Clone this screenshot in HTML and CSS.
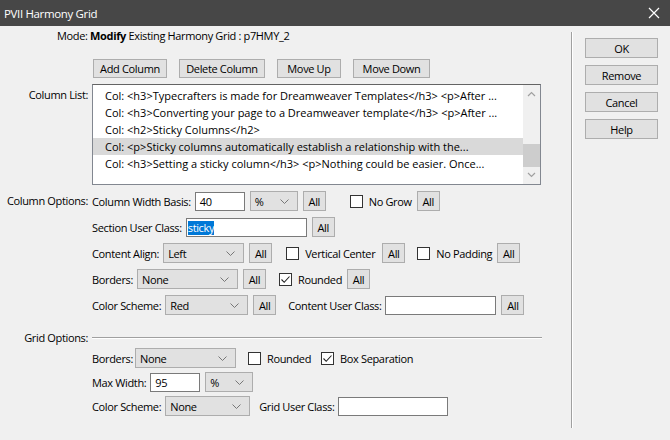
FILE: index.html
```html
<!DOCTYPE html>
<html>
<head>
<meta charset="utf-8">
<link rel="stylesheet" href="styles.css">
</head>
<body>
<div class="titlebar">
  <span class="title">PVII Harmony Grid</span>
  <svg class="close" width="12" height="12" viewBox="0 0 12 12"><path d="M1 1L11 11M11 1L1 11" stroke="#fff" stroke-width="1.2" fill="none"/></svg>
</div>
<div class="dialog">
  <div class="main">
    <div class="mode">Mode: <b>Modify</b> Existing Harmony Grid : p7HMY_2</div>
    <div class="toolbar">
      <div class="btn w-add">Add Column</div>
      <div class="btn w-del">Delete Column</div>
      <div class="btn w-up">Move Up</div>
      <div class="btn w-down">Move Down</div>
    </div>

    <div class="group list-group">
      <div class="glabel list-label">Column List:</div>
      <div class="listbox">
        <div class="items">
          <div class="item">Col: &lt;h3&gt;Typecrafters is made for Dreamweaver Templates&lt;/h3&gt; &lt;p&gt;After ...</div>
          <div class="item">Col: &lt;h3&gt;Converting your page to a Dreamweaver template&lt;/h3&gt; &lt;p&gt;After ...</div>
          <div class="item">Col: &lt;h2&gt;Sticky Columns&lt;/h2&gt;</div>
          <div class="item selected">Col: &lt;p&gt;Sticky columns automatically establish a relationship with the...</div>
          <div class="item">Col: &lt;h3&gt;Setting a sticky column&lt;/h3&gt; &lt;p&gt;Nothing could be easier. Once...</div>
        </div>
        <div class="scrollbar">
          <svg class="arrow" width="9" height="6" viewBox="0 0 9 6"><path d="M1 5L4.5 1.5L8 5" stroke="#a0a0a0" stroke-width="1.2" fill="none"/></svg>
          <div class="track"><div class="thumb"></div></div>
          <svg class="arrow" width="9" height="6" viewBox="0 0 9 6"><path d="M1 1L4.5 4.5L8 1" stroke="#a0a0a0" stroke-width="1.2" fill="none"/></svg>
        </div>
      </div>
    </div>

    <div class="group col-group">
      <div class="glabel opt-label">Column Options:</div>
      <div class="rows">
        <div class="row">
          <span class="lbl">Column Width Basis:</span>
          <div class="input w-40">40</div>
          <div class="select w-pct"><span>%</span><svg class="chev" width="9" height="5" viewBox="0 0 9 5"><path d="M0.5 0.5L4.5 4.5L8.5 0.5" stroke="#777" fill="none"/></svg></div>
          <div class="btn all">All</div>
          <div class="check-wrap ml-19"><span class="cb"></span><span>No Grow</span></div>
          <div class="btn all">All</div>
        </div>
        <div class="row">
          <span class="lbl">Section User Class:</span>
          <div class="input w-sec"><span class="sel-text">sticky</span></div>
          <div class="btn all">All</div>
        </div>
        <div class="row">
          <span class="lbl">Content Align:</span>
          <div class="select w-align"><span>Left</span><svg class="chev" width="9" height="5" viewBox="0 0 9 5"><path d="M0.5 0.5L4.5 4.5L8.5 0.5" stroke="#777" fill="none"/></svg></div>
          <div class="btn all">All</div>
          <div class="check-wrap ml-9"><span class="cb"></span><span>Vertical Center</span></div>
          <div class="btn all ml-2">All</div>
          <div class="check-wrap ml-7"><span class="cb"></span><span>No Padding</span></div>
          <div class="btn all">All</div>
        </div>
        <div class="row">
          <span class="lbl">Borders:</span>
          <div class="select w-bord"><span>None</span><svg class="chev" width="9" height="5" viewBox="0 0 9 5"><path d="M0.5 0.5L4.5 4.5L8.5 0.5" stroke="#777" fill="none"/></svg></div>
          <div class="btn all">All</div>
          <div class="check-wrap ml-8"><span class="cb checked"><svg width="11" height="11" viewBox="0 0 11 11"><path d="M1.5 5.5L4.2 8.3L9.5 2.5" stroke="#222" stroke-width="1.1" fill="none"/></svg></span><span>Rounded</span></div>
          <div class="btn all">All</div>
        </div>
        <div class="row">
          <span class="lbl">Color Scheme:</span>
          <div class="select w-color"><span>Red</span><svg class="chev" width="9" height="5" viewBox="0 0 9 5"><path d="M0.5 0.5L4.5 4.5L8.5 0.5" stroke="#777" fill="none"/></svg></div>
          <div class="btn all">All</div>
          <span class="lbl ml-7">Content User Class:</span>
          <div class="input w-cuc"></div>
          <div class="btn all">All</div>
        </div>
      </div>
    </div>

    <div class="group grid-head">
      <div class="glabel">Grid Options:</div>
      <div class="groove"></div>
    </div>
    <div class="group grid-group">
      <div class="glabel"></div>
      <div class="rows">
        <div class="row grow">
          <span class="lbl">Borders:</span>
          <div class="select w-gbord tight"><span>None</span><svg class="chev" width="9" height="5" viewBox="0 0 9 5"><path d="M0.5 0.5L4.5 4.5L8.5 0.5" stroke="#777" fill="none"/></svg></div>
          <div class="check-wrap ml-7"><span class="cb"></span><span>Rounded</span></div>
          <div class="check-wrap ml-5"><span class="cb checked"><svg width="11" height="11" viewBox="0 0 11 11"><path d="M1.5 5.5L4.2 8.3L9.5 2.5" stroke="#222" stroke-width="1.1" fill="none"/></svg></span><span>Box Separation</span></div>
        </div>
        <div class="row grow">
          <span class="lbl">Max Width:</span>
          <div class="input w-95">95</div>
          <div class="select w-gpct"><span>%</span><svg class="chev" width="9" height="5" viewBox="0 0 9 5"><path d="M0.5 0.5L4.5 4.5L8.5 0.5" stroke="#777" fill="none"/></svg></div>
        </div>
        <div class="row grow">
          <span class="lbl">Color Scheme:</span>
          <div class="select w-gcolor"><span>None</span><svg class="chev" width="9" height="5" viewBox="0 0 9 5"><path d="M0.5 0.5L4.5 4.5L8.5 0.5" stroke="#777" fill="none"/></svg></div>
          <span class="lbl ml-4">Grid User Class:</span>
          <div class="input w-guc"></div>
        </div>
      </div>
    </div>
  </div>
  <div class="vsep"></div>
  <div class="side">
    <div class="btn side-btn">OK</div>
    <div class="btn side-btn">Remove</div>
    <div class="btn side-btn">Cancel</div>
    <div class="btn side-btn">Help</div>
  </div>
</div>
</body>
</html>
```

FILE: styles.css
```css
* { box-sizing: border-box; }
html, body {
  margin: 0;
  padding: 0;
  width: 670px;
  height: 440px;
  overflow: hidden;
  background: #f0f0f0;
  font-family: "Open Sans", "Noto Sans", sans-serif;
  font-size: 11px;
  letter-spacing: -0.35px;
  color: #000;
}
.titlebar {
  height: 26px;
  background: #474747;
  color: #fff;
  display: flex;
  align-items: center;
  justify-content: space-between;
  padding: 0 10px 0 4px;
  font-size: 11.5px;
}
.close { display: block; }
.dialog {
  display: flex;
  height: 414px;
}
.main {
  width: 571px;
  flex: none;
}
.vsep {
  width: 2px;
  margin-top: 6px;
  height: 396px;
  border-left: 1px solid #a0a0a0;
  border-right: 1px solid #fff;
}
.side {
  padding: 12px 0 0 12px;
  display: flex;
  flex-direction: column;
  gap: 7px;
}
.side-btn {
  width: 73px;
  height: 21px;
}
.mode {
  margin-top: 2px;
  height: 16px;
  line-height: 16px;
  padding-left: 57px;
}
.mode b { font-weight: 700; }
.btn {
  background: #e1e1e1;
  border: 1px solid #adadad;
  display: flex;
  align-items: center;
  justify-content: center;
  height: 20px;
  flex: none;
}
.toolbar {
  margin-top: 15px;
  padding-left: 93px;
  display: flex;
  gap: 12px;
}
.toolbar .btn { height: 19px; }
.w-add { width: 74px; }
.w-del { width: 86px; }
.w-up { width: 64px; }
.w-down { width: 77px; }
.group {
  display: flex;
}
.glabel {
  width: 92px;
  flex: none;
  text-align: right;
  padding-right: 4px;
  line-height: 16px;
}
.list-group { margin-top: 6px; }
.list-label { padding-top: 3px; }
.listbox {
  width: 449px;
  height: 101px;
  background: #fff;
  border: 1px solid #828790;
  border-top-color: #646464;
  display: flex;
}
.items {
  flex: 1;
  padding-top: 2px;
}
.item {
  height: 17px;
  line-height: 17px;
  padding-left: 12px;
  white-space: nowrap;
  overflow: hidden;
  letter-spacing: 0;
}
.item.selected { background: #d9d9d9; }
.scrollbar {
  width: 17px;
  background: #f0f0f0;
  display: flex;
  flex-direction: column;
  align-items: center;
}
.scrollbar .arrow { margin: 6px 0; flex: none; }
.track {
  flex: 1;
  width: 100%;
  position: relative;
}
.thumb {
  position: absolute;
  left: 0;
  right: 0;
  top: 41px;
  height: 23px;
  background: #cdcdcd;
}
.col-group { margin-top: 3px; }
.opt-label { padding-top: 5px; }
.rows {
  display: flex;
  flex-direction: column;
}
.row {
  height: 26px;
  display: flex;
  align-items: center;
  gap: 5px;
}
.row.grow { height: 24px; }
.lbl { white-space: nowrap; margin-right: -1px; }
.input {
  height: 19px;
  background: #fff;
  border: 1px solid #7a7a7a;
  padding-left: 4px;
  line-height: 17px;
  flex: none;
}
.sel-text {
  background: #0078d7;
  color: #fff;
  display: inline-block;
  line-height: 14px;
}
.select {
  height: 20px;
  background: #e1e1e1;
  border: 1px solid #adadad;
  display: flex;
  align-items: center;
  justify-content: space-between;
  padding: 0 8px 0 4px;
  flex: none;
}
.select.tight { margin-left: -2px; }
.chev { display: block; }
.all { width: 23px; }
.cb {
  width: 13px;
  height: 13px;
  border: 1px solid #333;
  background: #fff;
  display: inline-flex;
  align-items: center;
  justify-content: center;
  flex: none;
}
.check-wrap {
  display: flex;
  align-items: center;
  gap: 6px;
}
.ml-19 { margin-left: 19px; }
.ml-9 { margin-left: 9px; }
.ml-8 { margin-left: 8px; }
.ml-7 { margin-left: 7px; }
.ml-5 { margin-left: 5px; }
.ml-4 { margin-left: 4px; }
.ml-2 { margin-left: 2px; }
.w-40 { width: 50px; }
.w-pct { width: 48px; }
.w-sec { width: 121px; padding-left: 1px; }
.w-align { width: 81px; }
.w-bord { width: 101px; }
.w-color { width: 83px; }
.w-cuc { width: 111px; }
.grid-head {
  margin-top: 12px;
  align-items: center;
}
.groove {
  width: 450px;
  height: 2px;
  border-top: 1px solid #a0a0a0;
  border-bottom: 1px solid #fff;
  margin-top: -1px;
}
.w-gbord { width: 101px; }
.w-95 { width: 50px; }
.w-gpct { width: 48px; }
.w-gcolor { width: 85px; }
.w-guc { width: 110px; }
```
